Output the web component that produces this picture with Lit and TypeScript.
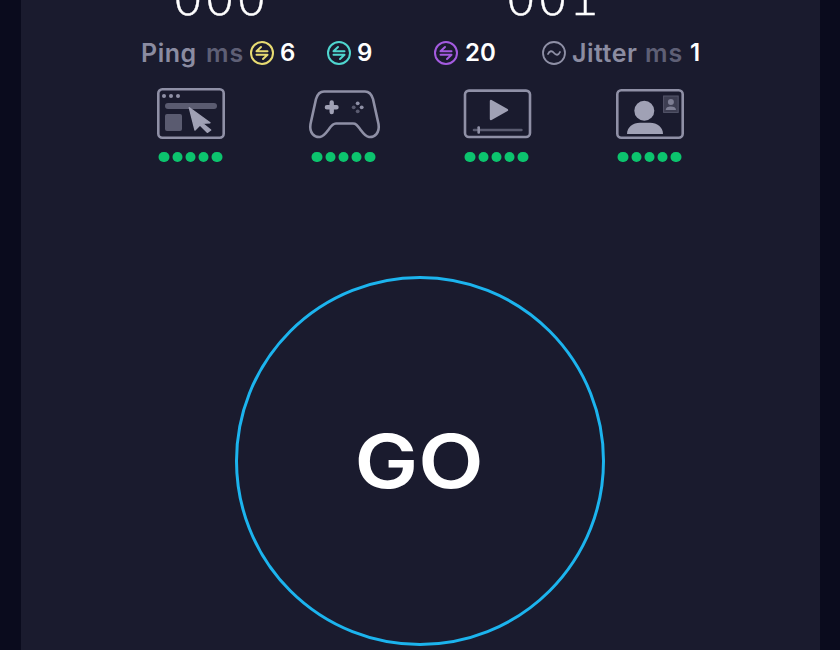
import { LitElement, html, css, svg } from "lit";
import { customElement } from "lit/decorators.js";

const swap = (color: string) => html`<svg class="mi" viewBox="0 0 24 24" fill="none" stroke=${color} stroke-width="2" stroke-linecap="round" stroke-linejoin="round">
  <circle cx="12" cy="12" r="11"></circle>
  <path d="M17.5 10.3H6.5L11 6M6.5 13.7H17.5L13 18"></path>
</svg>`;

const IC = "#8f90a6";
const DK = "#5a5b70";
const icons = [
  svg`<rect x="4.3" y="2.3" width="65.4" height="48.4" rx="4" fill="none" stroke=${IC} stroke-width="2.6"/>
    <circle cx="10" cy="9" r="2" fill=${IC}/><circle cx="17" cy="9" r="2" fill=${IC}/><circle cx="24" cy="9" r="2" fill=${IC}/>
    <rect x="11" y="16" width="52" height="6" rx="3" fill=${DK}/>
    <rect x="11" y="27" width="17" height="17" rx="2" fill=${DK}/>
    <path d="M35.3 20.7L56 35.7L48.3 36.3L56.7 43L53.3 45.3L46 38L41 43Z" fill="#a0a1b5" stroke="#a0a1b5" stroke-width="1.4" stroke-linejoin="round"/>`,
  svg`<path d="M17 4.5H58C62.5 4.5 64.5 7 66 12L71.5 37C73 46 67.5 50.5 62 50C58 49.5 56 46 53 42C50 38 49 36.5 46 36.5H29C26 36.5 24 39 22 42C19 46 17 49.5 13 50C7.5 50.5 2 46 3.5 37L9 12C10.5 7 12.5 4.5 17 4.5Z" fill="none" stroke=${IC} stroke-width="2.6" stroke-linejoin="round"/>
    <path d="M24.7 15.5V25.1M19.9 20.3H29.5" stroke="#a0a1b5" stroke-width="4.4" stroke-linecap="round"/>
    <circle cx="50.7" cy="16.3" r="1.9" fill=${IC}/><circle cx="54.7" cy="20.3" r="1.9" fill=${IC}/><circle cx="46.7" cy="20.3" r="1.9" fill=${DK}/><circle cx="50.7" cy="24.3" r="1.9" fill=${DK}/>`,
  svg`<rect x="5" y="3.6" width="65" height="46.4" rx="4" fill="none" stroke=${IC} stroke-width="2.6"/>
    <path d="M31 14V32L47 23Z" fill="#a0a1b5" stroke="#a0a1b5" stroke-width="2.4" stroke-linejoin="round"/>
    <rect x="12.7" y="41.7" width="50" height="2.6" rx="1.3" fill=${DK}/>
    <rect x="17.4" y="39.3" width="2.6" height="7.4" rx="1" fill=${IC}/>`,
  svg`<rect x="4.3" y="3.3" width="65.4" height="47.4" rx="4" fill="none" stroke=${IC} stroke-width="2.6"/>
    <circle cx="31.3" cy="23.7" r="10" fill="#a0a1b5"/>
    <path d="M14 47C14 40 20 35.7 27 35.7H37C44 35.7 50 40 50 47Z" fill="#a0a1b5"/>
    <rect x="50.6" y="9" width="14.6" height="16.4" fill="#3d3e52" stroke="#55566b"/>
    <circle cx="57.9" cy="15" r="3" fill="#7d7e93"/>
    <path d="M52.7 23C52.7 20.5 55 19.5 57.9 19.5S63 20.5 63 23Z" fill="#7d7e93"/>`,
];

@customElement("app-root")
export class AppRoot extends LitElement {
  static styles = css`
    :host {
      display: block;
      width: 840px;
      height: 650px;
      overflow: hidden;
      background: #0a0b1d;
      font-family: Inter, "Liberation Sans", sans-serif;
    }
    .panel {
      margin: 0 20px 0 21px;
      height: 650px;
      background: #1a1b2e;
      display: flex;
      flex-direction: column;
      align-items: center;
      overflow: hidden;
    }
    .speeds {
      width: 799px;
      height: 18px;
      display: flex;
      align-items: flex-end;
      overflow: hidden;
      color: #fff;
      font-family: "DejaVu Sans", sans-serif;
      font-size: 50px;
      font-weight: 200;
      line-height: 60px;
      -webkit-text-stroke: 0.4px #fff;
    }
    .speeds span { display: block; flex: none; height: 60px; white-space: nowrap; margin-bottom: -10px; }
    .speeds .a { margin-left: 151px; width: 333px; }
    .metrics {
      width: 799px;
      box-sizing: border-box;
      height: 36px;
      margin-top: 17px;
      padding-left: 120px;
      display: flex;
      align-items: center;
      font-size: 24px;
      line-height: 36px;
      font-weight: 600;
      white-space: nowrap;
    }
    .mi { width: 24px; height: 24px; flex: none; }
    .label { color: #8b8ca1; font-size: 25px; letter-spacing: 0.5px; }
    .unit { color: #5e5f75; font-size: 25px; letter-spacing: 1px; }
    .val { color: #fff; }
    .ping { width: 57px; }
    .u1 { margin-left: 8px; width: 37px; }
    .u2 { margin-left: 8px; width: 37px; }
    .gap1 { margin-left: 7px; }
    .ic1 { margin-left: 31px; }
    .ic2 { margin-left: 61px; }
    .ic3 { margin-left: 46px; }
    .v6 { margin-left: 6px; width: 16px; }
    .v9 { margin-left: 6px; width: 16px; }
    .v1 { margin-left: 8px; width: 16px; }
    .v20 { margin-left: 7px; width: 31px; }
    .jit { margin-left: 6px; width: 65px; }
    .devices {
      width: 612px;
      margin-top: 16px;
      display: grid;
      grid-template-columns: repeat(4, 153px);
    }
    .device {
      display: flex;
      flex-direction: column;
      align-items: center;
      gap: 10.5px;
    }
    .device svg { width: 74px; height: 54px; display: block; }
    .dots { display: flex; gap: 2.6px; transform: translateX(-0.5px); }
    .dots i { width: 10.6px; height: 10.6px; border-radius: 50%; background: #0cc46e; display: block; }
    .go {
      margin: 114.4px 2px 0 0;
      flex: none;
      width: 370px;
      height: 370px;
      box-sizing: border-box;
      border: 3px solid #1cb4ee;
      border-radius: 50%;
      display: flex;
      align-items: center;
      justify-content: center;
      color: #fff;
      font-size: 74px;
      font-weight: 600;
      line-height: 1;
    }
    .go span { display: block; transform: scaleX(1.15); }
  `;

  render() {
    return html`<div class="panel">
      <div class="speeds"><span class="a">000</span><span>001</span></div>
      <div class="metrics">
        <span class="label ping">Ping</span>
        <span class="unit u1">ms</span>
        <span class="gap1"></span>${swap("#e8dc72")}
        <span class="val v6">6</span>
        <span class="ic1"></span>${swap("#4fd6cf")}
        <span class="val v9">9</span>
        <span class="ic2"></span>${swap("#a45be0")}
        <span class="val v20">20</span>
        <span class="ic3"></span>
        <svg class="mi" viewBox="0 0 24 24" fill="none" stroke="#8f90a6" stroke-width="1.8" stroke-linecap="round">
          <circle cx="12" cy="12" r="11"></circle>
          <path d="M6 13C7.5 9.5 10 9.5 12 12S16.5 14.5 18 11"></path>
        </svg>
        <span class="label jit">Jitter</span>
        <span class="unit u2">ms</span>
        <span class="val v1">1</span>
      </div>
      <div class="devices">
        ${icons.map(
          (ic) => html`<div class="device">
            <svg viewBox="0 0 74 54">${ic}</svg>
            <div class="dots">${[0, 1, 2, 3, 4].map(() => html`<i></i>`)}</div>
          </div>`
        )}
      </div>
      <div class="go"><span>GO</span></div>
    </div>`;
  }
}
